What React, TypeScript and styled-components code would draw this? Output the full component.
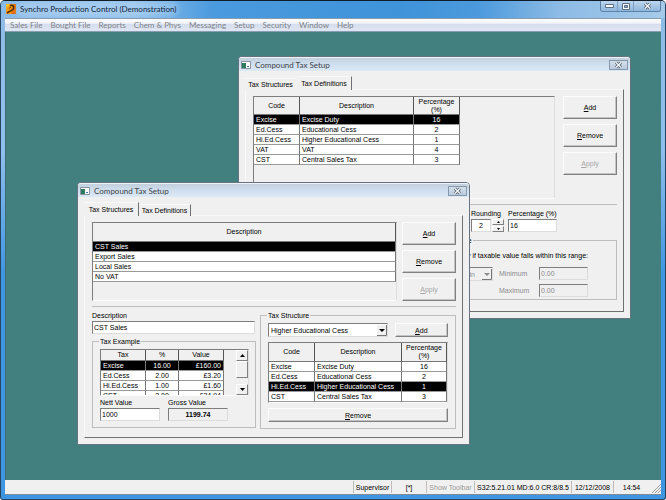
import React from "react";
import styled, { createGlobalStyle, css } from "styled-components";

const face = "#f0f0f0";
const shade = "#7d7d7d";
const soft = "#bdbdbd";
const ui = `"Liberation Sans", Arial, sans-serif`;
const chrome = `Lato, "Open Sans", sans-serif`;

const Global = createGlobalStyle`
  * { box-sizing: border-box; }
  body { margin: 0; background: #fff; font: 7px/9px ${ui}; color: #000; }
  button, input, select { font: inherit; color: inherit; margin: 0; }
`;

/* ---------- application frame ---------- */

const AppFrame = styled.div`
  display: flex;
  flex-direction: column;
  height: 100vh;
  padding: 0 4px 4px;
  border: 1px solid #24445f;
  border-top-color: #101c28;
  border-radius: 5px 5px 3px 3px;
  background: linear-gradient(180deg, #8fbce6 0, #8fbfec 30%, #3f95e2 55%, #3f95e2 100%);
  overflow: hidden;
`;

const TitleBar = styled.header`
  display: flex;
  align-items: flex-start;
  justify-content: space-between;
  flex: none;
  height: 17px;
  margin: 0 -4px;
  padding: 0 4px 0 5px;
  background: linear-gradient(90deg, #8abbe8 0, #8fc0ec 20%, #4a9ade 32%, #3f93d9 60%, #4c9add 72%, #8dbbe5 84%, #a6cbea 100%);
`;

const AppTitle = styled.h1`
  display: flex;
  align-items: center;
  gap: 4px;
  height: 16px;
  margin: 0;
  font: 400 8px/10px ${chrome};
  color: #10253a;
  white-space: nowrap;
`;

const Glow = styled.span`
  border-radius: 6px;
  background: rgba(255, 255, 255, 0.2);
  box-shadow: 0 0 5px 3px rgba(255, 255, 255, 0.2);
`;

const Captions = styled.div`
  display: flex;
  height: 11px;
  border: 1px solid #5d82a8;
  border-top: 0;
  border-radius: 0 0 3px 3px;
  overflow: hidden;
`;

const CaptionButton = styled.button<{ $wide?: boolean }>`
  display: grid;
  place-items: center;
  width: ${(p) => (p.$wide ? 27 : 16)}px;
  padding: 0;
  border: 0;
  border-left: 1px solid #7e9fc2;
  background: linear-gradient(#bcd6ee, #8fb7dd);
  &:first-child { border-left: 0; }
`;

const MenuBar = styled.nav`
  display: flex;
  align-items: center;
  gap: 8px;
  flex: none;
  height: 14px;
  padding: 0 4px 0 5px;
  border: 1px solid #8a9cb0;
  border-width: 1px 0;
  background: linear-gradient(#fdfdfe 0, #f0f3f9 35%, #d6deee 45%, #dfe6f3 100%);
`;

const MenuItem = styled.button`
  padding: 0;
  border: 0;
  background: none;
  font: 8px/10px ${chrome};
  color: #808286;
  white-space: nowrap;
`;

const Desktop = styled.main`
  position: relative;
  flex: 1;
  min-height: 0;
  border-left: 1px solid #3c6c70;
  background: #42807f;
  overflow: hidden;
`;

const StatusBar = styled.footer`
  display: flex;
  align-items: center;
  justify-content: flex-end;
  flex: none;
  height: 15px;
  border-bottom: 1px solid #7c8b9a;
  background: ${face};
`;

const StatusCell = styled.span<{ $w: number; $dim?: boolean }>`
  width: ${(p) => p.$w}px;
  height: 12px;
  border-left: 1px solid ${soft};
  line-height: 13px;
  text-align: center;
  white-space: nowrap;
  color: ${(p) => (p.$dim ? "#9a9a9a" : "#000")};
`;

/* ---------- child windows ---------- */

const ChildWindow = styled.section<{ $x: number; $y: number }>`
  position: absolute;
  left: ${(p) => p.$x}px;
  top: ${(p) => p.$y}px;
  width: 393px;
  padding: 0 6px 6px;
  border: 1px solid #66737f;
  border-radius: 4px 4px 0 0;
  background: ${face};
`;

const ChildTitle = styled.header`
  display: flex;
  align-items: center;
  justify-content: space-between;
  height: 14px;
  margin: 0 -6px 4px;
  padding: 0 2px;
  border-top: 1px solid #eef3f8;
  border-radius: 3px 3px 0 0;
  background: linear-gradient(#c3cfdc, #d0dfef 50%, #dbe8f6);
`;

const ChildName = styled.h2`
  display: flex;
  align-items: center;
  gap: 4px;
  margin: 0;
  font: 400 8px/10px ${chrome};
  color: #3d4348;
`;

const ChildClose = styled.button`
  display: grid;
  place-items: center;
  width: 19px;
  height: 10px;
  padding: 0;
  border: 1px solid #8698ac;
  background: linear-gradient(#d5dfea, #b9cadc);
`;

const TabStrip = styled.div`
  display: flex;
  align-items: flex-end;
  height: 15px;
  margin-bottom: -1px;
`;

const Tab = styled.button<{ $active?: boolean; $edge?: boolean }>`
  width: ${(p) => (p.$active ? 55 : 52)}px;
  height: ${(p) => (p.$active ? 14 : 12)}px;
  padding: 0;
  border: 0;
  border-top: 1px solid #f8f8f8;
  border-right: 1px solid ${(p) => (p.$edge ? "#707070" : "transparent")};
  background: ${face};
  line-height: 9px;
  white-space: nowrap;
`;

const TabPage = styled.div`
  display: flex;
  flex-direction: column;
  height: 223px;
  padding: 6px 6px 8px 7px;
  border: 1px solid #fafafa;
  border-right-color: #707070;
  border-bottom-color: #707070;
`;

const Split = styled.div`
  display: flex;
  justify-content: space-between;
`;

const Rule = styled.hr`
  width: 100%;
  margin: 5px 0 4px;
  border: 0;
  border-top: 1px solid ${soft};
`;

const ButtonColumn = styled.div`
  display: flex;
  flex-direction: column;
  gap: 5px;
`;

const PushButton = styled.button<{ $w: number; $h: number }>`
  width: ${(p) => p.$w}px;
  height: ${(p) => p.$h}px;
  padding: 0;
  border: 1px solid #fcfcfc;
  border-right-color: #808080;
  border-bottom-color: #808080;
  background: ${face};
  box-shadow: inset -1px -1px #c4c4c4;
  &:disabled { color: #a6a6a6; }
`;

/* ---------- grids ---------- */

const ListBox = styled.div<{ $w: number; $h: number }>`
  display: flex;
  align-items: flex-start;
  justify-content: space-between;
  width: ${(p) => p.$w}px;
  height: ${(p) => p.$h}px;
  border: 1px solid ${shade};
  border-right-color: #dedede;
  border-bottom-color: #fcfcfc;
  overflow: hidden;
`;

const Table = styled.table`
  border-collapse: separate;
  border-spacing: 0;
  table-layout: fixed;
`;

const Head = styled.th<{ $w: number; $h: number }>`
  width: ${(p) => p.$w}px;
  height: ${(p) => p.$h}px;
  padding: 0;
  border-right: 1px solid #555;
  border-bottom: 1px solid #777;
  font-weight: 400;
  line-height: 8px;
  background: ${face};
`;

const Row = styled.tr<{ $on?: boolean }>`
  background: #fff;
  ${(p) => p.$on && css`background: #000; color: #fff;`}
`;

const Cell = styled.td<{ $align?: string }>`
  height: 10px;
  padding: 0 2px;
  border-right: 1px solid #777;
  border-bottom: 1px solid #999;
  line-height: 9px;
  text-align: ${(p) => p.$align ?? "left"};
  white-space: nowrap;
`;

type Column = { name: string; width: number; align?: string };

function Grid({ columns, rows, selected, head = 19 }: { columns: Column[]; rows: string[][]; selected: number; head?: number }) {
  return (
    <Table>
      <thead>
        <tr>{columns.map((c) => <Head key={c.name} $w={c.width} $h={head} scope="col">{c.name}</Head>)}</tr>
      </thead>
      <tbody>
        {rows.map((r, i) => (
          <Row key={r[0]} $on={i === selected}>
            {r.map((v, j) => <Cell key={j} $align={columns[j].align}>{v}</Cell>)}
          </Row>
        ))}
      </tbody>
    </Table>
  );
}

/* ---------- form parts ---------- */

const Field = styled.label<{ $dim?: boolean }>`
  display: flex;
  flex-direction: column;
  gap: 1px;
  white-space: nowrap;
  color: ${(p) => (p.$dim ? "#8c8c8c" : "#000")};
`;

const InlineField = styled(Field)`
  flex-direction: row;
  align-items: center;
  justify-content: space-between;
  width: 89px;
`;

const NarrowField = styled(Field)`
  width: 20px;
`;

const TextBox = styled.input<{ $w: number; $align?: string; $bold?: boolean }>`
  width: ${(p) => p.$w}px;
  height: 13px;
  padding: 0 1px;
  border: 1px solid ${shade};
  border-right-color: #dcdcdc;
  border-bottom-color: #dcdcdc;
  border-radius: 0;
  background: #fff;
  line-height: 9px;
  text-align: ${(p) => p.$align ?? "left"};
  font-weight: ${(p) => (p.$bold ? 700 : 400)};
  &:read-only, &:disabled { background: ${face}; }
`;

const Group = styled.fieldset<{ $w: number; $h: number }>`
  display: flex;
  flex-direction: column;
  min-width: 0;
  width: ${(p) => p.$w}px;
  height: ${(p) => p.$h}px;
  margin: 0;
  padding: 3px 7px 0;
  border: 1px solid ${soft};
`;

const Legend = styled.legend`
  height: 9px;
  margin: 0 -1px;
  padding: 0 1px;
`;

const FormRow = styled.div<{ $gap?: number; $mt?: number }>`
  display: flex;
  align-items: flex-end;
  gap: ${(p) => p.$gap ?? 7}px;
  margin-top: ${(p) => p.$mt ?? 0}px;
`;

const RangeBody = styled.div`
  display: flex;
  flex-direction: column;
  align-items: flex-end;
  gap: 7px;
  padding: 3px 21px 0 0;
  white-space: nowrap;
`;

const RangeInputs = styled.div`
  display: flex;
  align-items: flex-start;
  gap: 6px;
`;

const Limits = styled.div`
  display: flex;
  flex-direction: column;
  gap: 4px;
`;

const RangeArea = styled.div`
  display: flex;
  justify-content: flex-end;
  margin-top: 4px;
`;

const Combo = styled.span<{ $w: number }>`
  display: grid;
  width: ${(p) => p.$w}px;
  height: 14px;
  svg { grid-area: 1 / 1; justify-self: end; align-self: center; margin-right: 1px; pointer-events: none; z-index: 1; }
`;

const Select = styled.select`
  grid-area: 1 / 1;
  appearance: none;
  width: 100%;
  height: 14px;
  padding: 0 13px 0 2px;
  border: 1px solid ${shade};
  border-right-color: #dcdcdc;
  border-bottom-color: #dcdcdc;
  border-radius: 0;
  background: #fff;
  &:disabled {
    padding-right: 17px;
    background: ${face};
    color: #8c8c8c;
    text-align-last: right;
    opacity: 1;
  }
`;

const Arrows = styled.div<{ $w: number }>`
  display: flex;
  flex-direction: column;
  justify-content: space-between;
  align-self: stretch;
  width: ${(p) => p.$w}px;
`;

const Spinner = styled(Arrows)`
  align-self: auto;
  height: 13px;
`;

const ArrowButton = styled.button<{ $h: number }>`
  display: grid;
  place-items: center;
  height: ${(p) => p.$h}px;
  padding: 0;
  border: 1px solid #fff;
  border-right-color: #808080;
  border-bottom-color: #808080;
  background: ${face};
`;

const Thumb = styled.div`
  flex: 1;
  margin-bottom: 6px;
  border: 1px solid #fff;
  border-right-color: #808080;
  border-bottom-color: #808080;
`;

/* ---------- drawings ---------- */

const Triangle = ({ up }: { up?: boolean }) => (
  <svg width="5" height="3" viewBox="0 0 5 3"><path d={up ? "M0 3 2.5 0 5 3z" : "M0 0h5L2.5 3z"} /></svg>
);

const TinyTriangle = ({ up }: { up?: boolean }) => (
  <svg width="3" height="2" viewBox="0 0 3 2"><path d={up ? "M0 2 1.5 0 3 2z" : "M0 0h3L1.5 2z"} /></svg>
);

const DropArrow = ({ dim }: { dim?: boolean }) => (
  <svg width="10" height="11" viewBox="0 0 10 11">
    <path d="M0 0h10v11H0z" fill="#f0f0f0" />
    <path d="M0 10.500h9.500V0" fill="none" stroke="#777" />
    <path d="M2 4h6L5 7z" fill={dim ? "#8c8c8c" : "#000"} />
  </svg>
);

const CrossIcon = () => (
  <svg width="9" height="8" viewBox="0 0 9 8">
    <path d="M2 1.500 7 6.500M7 1.500 2 6.500" stroke="#53616f" strokeWidth="3" />
    <path d="M2 1.500 7 6.500M7 1.500 2 6.500" stroke="#f5f8fb" strokeWidth="1.400" />
  </svg>
);

const AppIcon = () => (
  <svg width="10" height="10" viewBox="0 0 10 10">
    <path d="M0 0h10v10H0z" fill="#f29a12" />
    <path d="M0 0h4L0 5z" fill="#f7c02c" />
    <path d="M7 0h3v10H5z" fill="#e0700f" />
    <path d="M4 1.500c3-.8 4.200.8 3.500 3C7 6.500 5 6 3.500 7.500L1 9" fill="none" stroke="#4b2408" strokeWidth="1.500" />
    <path d="M3 4.500 5 3" stroke="#7a3a0a" />
  </svg>
);

const FormIcon = () => (
  <svg width="10" height="8" viewBox="0 0 10 8">
    <path d="M.5.5h9v7h-9z" fill="#fff" stroke="#8795a3" />
    <path d="M1 2h4v5H1z" fill="#2f7b62" />
    <path d="M6 5h2v1H6z" fill="#3c78b4" />
  </svg>
);

const Grip = () => (
  <svg width="12" height="12" viewBox="0 0 12 12">
    <path d="M3 12 12 3M6 12l6-6M9 12l3-3" stroke="#9b9b9b" />
  </svg>
);

/* ---------- windows ---------- */

const menus = ["Sales File", "Bought File", "Reports", "Chem & Phys", "Messaging", "Setup", "Security", "Window", "Help"];

const Actions = () => (
  <ButtonColumn>
    <PushButton $w={54} $h={23}><u>A</u>dd</PushButton>
    <PushButton $w={54} $h={23}><u>R</u>emove</PushButton>
    <PushButton $w={54} $h={23} disabled><u>A</u>pply</PushButton>
  </ButtonColumn>
);

function Child({ x, y, active, children }: { x: number; y: number; active: number; children: React.ReactNode }) {
  return (
    <ChildWindow $x={x} $y={y}>
      <ChildTitle>
        <ChildName><FormIcon />Compound Tax Setup</ChildName>
        <ChildClose aria-label="Close"><CrossIcon /></ChildClose>
      </ChildTitle>
      <TabStrip role="tablist">
        <Tab role="tab" aria-selected={active === 0} $active={active === 0} $edge={active === 0}>Tax Structures</Tab>
        <Tab role="tab" aria-selected={active === 1} $active={active === 1} $edge>Tax Definitions</Tab>
      </TabStrip>
      <TabPage role="tabpanel">{children}</TabPage>
    </ChildWindow>
  );
}

const Definitions = () => (
  <Child x={232} y={24} active={1}>
    <Split>
      <ListBox $w={302} $h={103}>
        <Grid
          head={18}
          columns={[{ name: "Code", width: 46 }, { name: "Description", width: 114 }, { name: "Percentage (%)", width: 46, align: "center" }]}
          rows={[["Excise", "Excise Duty", "16"], ["Ed.Cess", "Educational Cess", "2"], ["Hi.Ed.Cess", "Higher Educational Cess", "1"], ["VAT", "VAT", "4"], ["CST", "Central Sales Tax", "3"]]}
          selected={0}
        />
      </ListBox>
      <Actions />
    </Split>
    <Rule />
    <FormRow $gap={4}>
      <Field>Code<TextBox $w={50} defaultValue="Excise" /></Field>
      <Field>Description<TextBox $w={160} defaultValue="Excise Duty" /></Field>
      <FormRow $gap={1}>
        <NarrowField>Rounding<TextBox $w={20} $align="center" defaultValue="2" /></NarrowField>
        <Spinner $w={12}>
          <ArrowButton $h={6} aria-label="More"><TinyTriangle up /></ArrowButton>
          <ArrowButton $h={6} aria-label="Less"><TinyTriangle /></ArrowButton>
        </Spinner>
      </FormRow>
      <Field>Percentage (%)<TextBox $w={49} defaultValue="16" /></Field>
    </FormRow>
    <RangeArea>
      <Group $w={200} $h={64}>
        <Legend>Taxable Range</Legend>
        <RangeBody>
          <span>Apply if taxable value falls within this range:</span>
          <RangeInputs>
            <Combo $w={60}>
              <Select aria-label="Range type" disabled><option>Within</option></Select>
              <DropArrow dim />
            </Combo>
            <Limits>
              <InlineField $dim>Minimum<TextBox $w={49} disabled value="0.00" /></InlineField>
              <InlineField $dim>Maximum<TextBox $w={49} disabled value="0.00" /></InlineField>
            </Limits>
          </RangeInputs>
        </RangeBody>
      </Group>
    </RangeArea>
  </Child>
);

const Structures = () => (
  <Child x={71} y={150} active={0}>
    <Split>
      <ListBox $w={305} $h={79}>
        <Grid
          columns={[{ name: "Description", width: 304 }]}
          rows={[["CST Sales"], ["Export Sales"], ["Local Sales"], ["No VAT"]]}
          selected={0}
        />
      </ListBox>
      <Actions />
    </Split>
    <Rule />
    <Split>
      <div>
        <Field>Description<TextBox $w={163} defaultValue="CST Sales" /></Field>
        <FormRow $mt={3}>
          <Group $w={164} $h={91}>
            <Legend>Tax Example</Legend>
            <ListBox $w={149} $h={47}>
              <Grid
                head={11}
                columns={[{ name: "Tax", width: 45 }, { name: "%", width: 33, align: "center" }, { name: "Value", width: 45, align: "right" }]}
                rows={[["Excise", "16.00", "£160.00"], ["Ed.Cess", "2.00", "£3.20"], ["Hi.Ed.Cess", "1.00", "£1.60"], ["CST", "3.00", "£34.94"]]}
                selected={0}
              />
              <Arrows $w={12}>
                <ArrowButton $h={11} aria-label="Scroll up"><Triangle up /></ArrowButton>
                <Thumb />
                <ArrowButton $h={11} aria-label="Scroll down"><Triangle /></ArrowButton>
              </Arrows>
            </ListBox>
            <FormRow $gap={8} $mt={2}>
              <Field>Nett Value<TextBox $w={60} defaultValue="1000" /></Field>
              <Field>Gross Value<TextBox $w={60} $align="center" $bold readOnly value="1199.74" /></Field>
            </FormRow>
          </Group>
        </FormRow>
      </div>
      <Group $w={196} $h={118}>
        <Legend>Tax Structure</Legend>
        <FormRow>
          <Combo $w={121}>
            <Select aria-label="Tax"><option>Higher Educational Cess</option></Select>
            <DropArrow />
          </Combo>
          <PushButton $w={54} $h={14}><u>A</u>dd</PushButton>
        </FormRow>
        <FormRow $mt={5}>
          <ListBox $w={181} $h={61}>
            <Grid
              columns={[{ name: "Code", width: 46 }, { name: "Description", width: 87 }, { name: "Percentage (%)", width: 45, align: "center" }]}
              rows={[["Excise", "Excise Duty", "16"], ["Ed.Cess", "Educational Cess", "2"], ["Hi.Ed.Cess", "Higher Educational Cess", "1"], ["CST", "Central Sales Tax", "3"]]}
              selected={2}
            />
          </ListBox>
        </FormRow>
        <FormRow $mt={5}>
          <PushButton $w={182} $h={14}><u>R</u>emove</PushButton>
        </FormRow>
      </Group>
    </Split>
  </Child>
);

export default function App() {
  return (
    <AppFrame>
      <Global />
      <TitleBar>
        <AppTitle><AppIcon /><Glow>Synchro Production Control (Demonstration)</Glow></AppTitle>
        <Captions>
          <CaptionButton aria-label="Minimize"><svg width="9" height="4" viewBox="0 0 9 4"><path d="M.5.5h8v3h-8z" fill="#fff" stroke="#5b6f86" /></svg></CaptionButton>
          <CaptionButton aria-label="Restore"><svg width="8" height="7" viewBox="0 0 8 7"><path d="M.5.5h7v6h-7z" fill="#fff" stroke="#5b6f86" /><path d="M2.500 2.500h3v2h-3z" fill="#7fa6cf" stroke="#5b6f86" /></svg></CaptionButton>
          <CaptionButton $wide aria-label="Close"><CrossIcon /></CaptionButton>
        </Captions>
      </TitleBar>
      <MenuBar>{menus.map((m) => <MenuItem key={m}>{m}</MenuItem>)}</MenuBar>
      <Desktop>
        <Definitions />
        <Structures />
      </Desktop>
      <StatusBar>
        <StatusCell $w={38}>Supervisor</StatusCell>
        <StatusCell $w={35}>[*]</StatusCell>
        <StatusCell $w={48} $dim>Show Toolbar</StatusCell>
        <StatusCell $w={97}>S32:5.21.01 MD:6.0 CR:8/8.5</StatusCell>
        <StatusCell $w={42}>12/12/2008</StatusCell>
        <StatusCell $w={36}>14:54</StatusCell>
        <Grip />
      </StatusBar>
    </AppFrame>
  );
}
